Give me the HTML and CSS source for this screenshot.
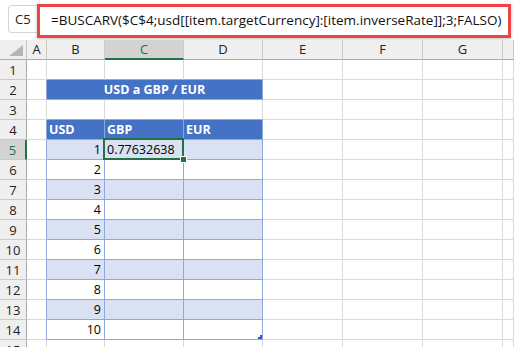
FILE: index.html
```html
<!DOCTYPE html>
<html>
<head>
<meta charset="utf-8">
<link rel="stylesheet" href="styles.css">
</head>
<body>
<div class="topbar">
  <div class="namebox">C5</div>
  <div class="formula">=BUSCARV($C$4;usd[[item.targetCurrency]:[item.inverseRate]];3;FALSO)</div>
</div>
<div class="sheet">
  <!-- header -->
  <div class="c ch corner"><span class="tri"></span></div>
  <div class="c ch">A</div>
  <div class="c ch">B</div>
  <div class="c ch sel">C</div>
  <div class="c ch">D</div>
  <div class="c ch">E</div>
  <div class="c ch">F</div>
  <div class="c ch">G</div>
  <div class="c ch last"></div>
  <!-- row 1 -->
  <div class="c rh">1</div>
  <div class="c"></div>
  <div class="c tt"></div><div class="c tt"></div><div class="c tt"></div>
  <div class="c"></div><div class="c"></div><div class="c"></div><div class="c"></div>
  <!-- row 2 -->
  <div class="c rh">2</div>
  <div class="c tl"></div>
  <div class="c title">USD a GBP / EUR</div>
  <div class="c"></div><div class="c"></div><div class="c"></div><div class="c"></div>
  <!-- row 3 -->
  <div class="c rh">3</div>
  <div class="c"></div>
  <div class="c tt"></div><div class="c tt"></div><div class="c tt"></div>
  <div class="c"></div><div class="c"></div><div class="c"></div><div class="c"></div>
  <!-- row 4 -->
  <div class="c rh">4</div>
  <div class="c tl"></div>
  <div class="c th">USD</div><div class="c th">GBP</div><div class="c th">EUR</div>
  <div class="c"></div><div class="c"></div><div class="c"></div><div class="c"></div>
  <!-- row 5 -->
  <div class="c rh rsel">5</div>
  <div class="c tl"></div>
  <div class="c tb band num">1</div><div class="c tb band active">0.77632638<span class="handle"></span></div><div class="c tb band"></div>
  <div class="c"></div><div class="c"></div><div class="c"></div><div class="c"></div>
  <!-- row 6 -->
  <div class="c rh">6</div>
  <div class="c tl"></div>
  <div class="c tb num">2</div><div class="c tb"></div><div class="c tb"></div>
  <div class="c"></div><div class="c"></div><div class="c"></div><div class="c"></div>
  <!-- row 7 -->
  <div class="c rh">7</div>
  <div class="c tl"></div>
  <div class="c tb band num">3</div><div class="c tb band"></div><div class="c tb band"></div>
  <div class="c"></div><div class="c"></div><div class="c"></div><div class="c"></div>
  <!-- row 8 -->
  <div class="c rh">8</div>
  <div class="c tl"></div>
  <div class="c tb num">4</div><div class="c tb"></div><div class="c tb"></div>
  <div class="c"></div><div class="c"></div><div class="c"></div><div class="c"></div>
  <!-- row 9 -->
  <div class="c rh">9</div>
  <div class="c tl"></div>
  <div class="c tb band num">5</div><div class="c tb band"></div><div class="c tb band"></div>
  <div class="c"></div><div class="c"></div><div class="c"></div><div class="c"></div>
  <!-- row 10 -->
  <div class="c rh">10</div>
  <div class="c tl"></div>
  <div class="c tb num">6</div><div class="c tb"></div><div class="c tb"></div>
  <div class="c"></div><div class="c"></div><div class="c"></div><div class="c"></div>
  <!-- row 11 -->
  <div class="c rh">11</div>
  <div class="c tl"></div>
  <div class="c tb band num">7</div><div class="c tb band"></div><div class="c tb band"></div>
  <div class="c"></div><div class="c"></div><div class="c"></div><div class="c"></div>
  <!-- row 12 -->
  <div class="c rh">12</div>
  <div class="c tl"></div>
  <div class="c tb num">8</div><div class="c tb"></div><div class="c tb"></div>
  <div class="c"></div><div class="c"></div><div class="c"></div><div class="c"></div>
  <!-- row 13 -->
  <div class="c rh">13</div>
  <div class="c tl"></div>
  <div class="c tb band num">9</div><div class="c tb band"></div><div class="c tb band"></div>
  <div class="c"></div><div class="c"></div><div class="c"></div><div class="c"></div>
  <!-- row 14 -->
  <div class="c rh">14</div>
  <div class="c tl"></div>
  <div class="c tb num">10</div><div class="c tb"></div><div class="c tb resize"><span class="grip"></span></div>
  <div class="c"></div><div class="c"></div><div class="c"></div><div class="c"></div>
  <!-- row 15 -->
  <div class="c rh">15</div>
  <div class="c"></div>
  <div class="c"></div><div class="c"></div><div class="c"></div>
  <div class="c"></div><div class="c"></div><div class="c"></div><div class="c"></div>
</div>
</body>
</html>
```

FILE: styles.css
```css
* { box-sizing: border-box; }
html, body { margin: 0; padding: 0; background: #fff; }
body {
  width: 514px;
  height: 347px;
  overflow: hidden;
  font-family: "Open Sans", "Noto Sans", sans-serif;
  color: #000;
}
.topbar {
  height: 40px;
  display: flex;
  align-items: flex-start;
  padding-top: 4px;
}
.namebox {
  margin-left: 8px;
  margin-top: 1px;
  width: 29px;
  height: 28px;
  border: 1px solid #d4d4d4;
  border-right: none;
  border-radius: 4px 0 0 4px;
  font-size: 13px;
  line-height: 26px;
  padding-left: 6px;
  color: #222;
}
.formula {
  width: 474px;
  height: 34px;
  border: 3px solid #ef4446;
  font-size: 13.5px;
  line-height: 27px;
  padding-left: 11px;
  white-space: nowrap;
  color: #111;
  box-shadow: 0 1px 3px rgba(0,0,0,0.25);
}
.sheet {
  display: grid;
  grid-template-columns: 27px 20px 58px 79px 79px 80px 80px 80px 11px;
  grid-auto-rows: 20px;
  font-size: 12.5px;
}
.c {
  position: relative;
  border-right: 1px solid #dadada;
  border-bottom: 1px solid #dadada;
  line-height: 20px;
  white-space: nowrap;
  padding: 0 2px;
}
.ch {
  background: #efefef;
  border-right-color: #c9c9c9;
  border-bottom-color: #ababab;
  text-align: center;
  font-size: 13px;
  line-height: 19px;
  color: #222;
}
.ch.sel {
  background: #d3d3d3;
  color: #217346;
  border-bottom: 2px solid #217346;
}
.corner { position: relative; }
.tri {
  position: absolute;
  right: 3px;
  bottom: 3px;
  width: 0;
  height: 0;
  border-left: 14px solid transparent;
  border-bottom: 11px solid #b5b5b5;
}
.rh {
  background: #efefef;
  border-right-color: #ababab;
  border-bottom-color: #c9c9c9;
  text-align: center;
  font-size: 13px;
  color: #222;
  padding: 0;
}
.rh.rsel {
  background: #d3d3d3;
  color: #217346;
  border-right: 2px solid #217346;
}
.tt { border-bottom-color: #8ea9db; }
.tl { border-right-color: #8ea9db; }
.title {
  grid-column: span 3;
  background: #4472c4;
  color: #fff;
  font-weight: 700;
  text-align: center;
  border-right-color: #8ea9db;
  border-bottom-color: #8ea9db;
}
.th {
  background: #4472c4;
  color: #fff;
  font-weight: 700;
  border-right-color: #8ea9db;
  border-bottom-color: #8ea9db;
}
.tb {
  border-right-color: #8ea9db;
  border-bottom-color: #8ea9db;
}
.band { background: #d9e1f2; }
.num { text-align: right; padding-right: 3px; }
.active::after {
  content: "";
  position: absolute;
  left: -2px;
  top: -2px;
  right: -1px;
  bottom: -1px;
  border: 2px solid #217346;
}
.handle {
  position: absolute;
  right: -4px;
  bottom: -4px;
  width: 7px;
  height: 7px;
  background: #217346;
  border: 1px solid #fff;
  z-index: 2;
}
.grip {
  position: absolute;
  right: 0;
  bottom: 0;
  width: 4px;
  height: 4px;
  background: #3b55b5;
  clip-path: polygon(100% 0, 100% 100%, 0 100%, 0 50%, 50% 50%, 50% 0);
}
```
